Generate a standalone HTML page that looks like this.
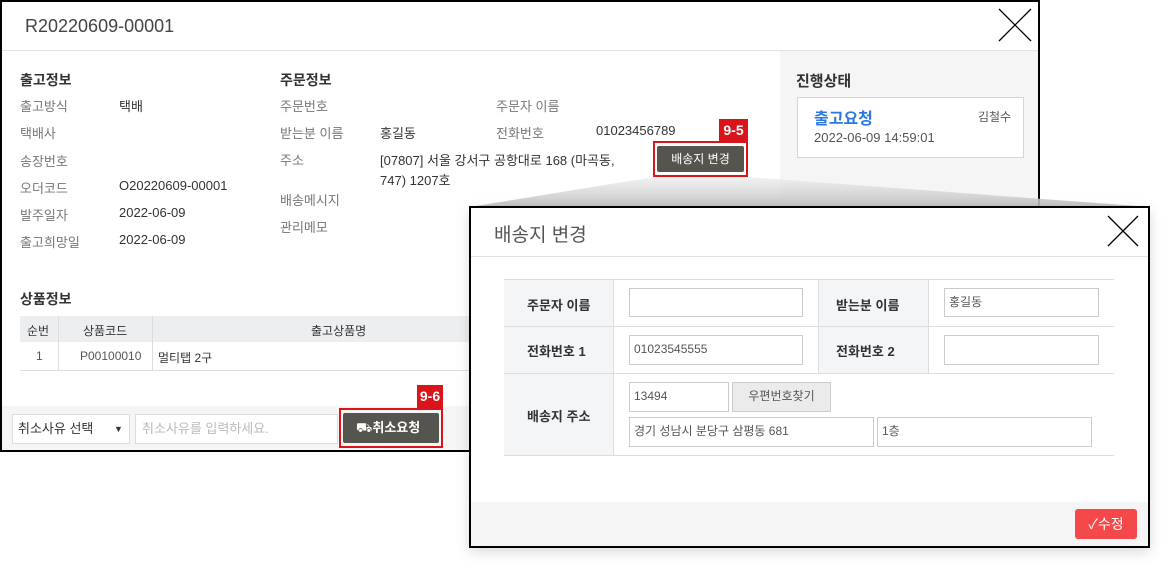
<!DOCTYPE html>
<html><head><meta charset="utf-8"><style>
*{margin:0;padding:0;box-sizing:border-box}
body{width:1173px;height:572px;background:#fff;position:relative;overflow:hidden;font-family:"Liberation Sans","Noto Sans CJK KR",sans-serif;font-size:13px;color:#333}
.a{position:absolute;white-space:nowrap}
.g{color:#777}
.t{font-weight:bold;font-size:14px;color:#333}
.in{position:absolute;background:#fff;border:1px solid #ccc;font-size:12px;color:#555;line-height:27px;padding-left:4px;white-space:nowrap}
</style></head><body>
<div class="a" style="left:0;top:0;width:1040px;height:452px;border:2px solid #000;background:#fff"></div>
<div class="a" style="left:2px;top:50px;width:1036px;height:1px;background:#e2e2e2"></div>
<div class="a" style="left:25px;top:16px;font-size:18px;color:#444">R20220609-00001</div>
<svg class="a" style="left:998px;top:8px" width="34" height="34"><path d="M1 1L33 33M33 1L1 33" stroke="#000" stroke-width="1.3"/></svg>
<div class="a" style="left:780px;top:51px;width:258px;height:399px;background:#f5f5f5"></div>
<div class="a t" style="left:796px;top:70px;font-size:15px">진행상태</div>
<div class="a" style="left:797px;top:97px;width:227px;height:61px;background:#fff;border:1px solid #d6d6d6"></div>
<div class="a" style="left:814px;top:105px;font-size:16px;color:#2a7ae2;font-weight:bold">출고요청</div>
<div class="a" style="left:978px;top:108px;font-size:12px;color:#555">김철수</div>
<div class="a" style="left:814px;top:130px;font-size:13px;color:#555">2022-06-09 14:59:01</div>

<div class="a t" style="left:20px;top:70px">출고정보</div>
<div class="a g" style="left:20px;top:96px">출고방식</div><div class="a" style="left:119px;top:96px">택배</div>
<div class="a g" style="left:20px;top:123px">택배사</div>
<div class="a g" style="left:20px;top:151px">송장번호</div>
<div class="a g" style="left:20px;top:178px">오더코드</div><div class="a" style="left:119px;top:178px">O20220609-00001</div>
<div class="a g" style="left:20px;top:205px">발주일자</div><div class="a" style="left:119px;top:205px">2022-06-09</div>
<div class="a g" style="left:20px;top:232px">출고희망일</div><div class="a" style="left:119px;top:232px">2022-06-09</div>

<div class="a t" style="left:280px;top:70px">주문정보</div>
<div class="a g" style="left:280px;top:96px">주문번호</div>
<div class="a g" style="left:496px;top:96px">주문자 이름</div>
<div class="a g" style="left:280px;top:123px">받는분 이름</div><div class="a" style="left:380px;top:123px">홍길동</div>
<div class="a g" style="left:496px;top:123px">전화번호</div><div class="a" style="left:596px;top:123px">01023456789</div>
<div class="a g" style="left:280px;top:150px">주소</div>
<div class="a" style="left:380px;top:150px">[07807] 서울 강서구 공항대로 168 (마곡동,</div>
<div class="a" style="left:380px;top:170px">747) 1207호</div>
<div class="a g" style="left:280px;top:190px">배송메시지</div>
<div class="a g" style="left:280px;top:217px">관리메모</div>

<div class="a" style="left:719px;top:119px;width:29px;height:22px;background:#d9141b;color:#fff;font-weight:bold;font-size:14px;text-align:center;line-height:22px">9-5</div>
<div class="a" style="left:653px;top:141px;width:95px;height:36px;border:2px solid #d9141b"></div>
<div class="a" style="left:657px;top:146px;width:87px;height:26px;background:#56544f;border-radius:2px;color:#fff;font-size:12px;text-align:center;line-height:26px">배송지 변경</div>

<div class="a t" style="left:20px;top:289px">상품정보</div>
<div class="a" style="left:20px;top:316px;width:450px;height:55px;border-bottom:1px solid #ddd"></div>
<div class="a" style="left:20px;top:316px;width:450px;height:26px;background:#edeef0"></div>
<div class="a" style="left:58px;top:316px;width:1px;height:55px;background:#ddd"></div>
<div class="a" style="left:152px;top:316px;width:1px;height:55px;background:#ddd"></div>
<div class="a" style="left:27px;top:322px;font-size:12px">순번</div>
<div class="a" style="left:83px;top:322px;font-size:12px">상품코드</div>
<div class="a" style="left:311px;top:322px;font-size:12px">출고상품명</div>
<div class="a" style="left:36px;top:349px;font-size:12px;color:#555">1</div>
<div class="a" style="left:80px;top:349px;font-size:12px;color:#555">P00100010</div>
<div class="a" style="left:158px;top:349px;font-size:12px">멀티탭 2구</div>

<div class="a" style="left:2px;top:406px;width:1036px;height:44px;background:#f5f5f5"></div>
<div class="a" style="left:12px;top:414px;width:118px;height:30px;background:#fff;border:1px solid #ddd;font-size:13px;line-height:28px;padding-left:5px">취소사유 선택<span style="position:absolute;left:101px;font-size:9px">▼</span></div>
<div class="a" style="left:135px;top:414px;width:203px;height:30px;background:#fff;border:1px solid #ddd;font-size:13px;color:#bbb;line-height:28px;padding-left:6px">취소사유를 입력하세요.</div>
<div class="a" style="left:417px;top:385px;width:26px;height:23px;background:#d9141b;color:#fff;font-weight:bold;font-size:14px;text-align:center;line-height:23px">9-6</div>
<div class="a" style="left:339px;top:408px;width:104px;height:40px;border:2px solid #d9141b"></div>
<div class="a" style="left:343px;top:413px;width:96px;height:30px;background:#56544f;border-radius:2px;color:#fff;font-size:13px;font-weight:bold;line-height:30px;padding-left:13px"><span style="font-weight:normal">⛟</span>취소요청</div>

<svg class="a" style="left:0;top:0" width="1173" height="572"><defs><linearGradient id="gg" x1="0" y1="0" x2="0" y2="1"><stop offset="0" stop-color="#ececec" stop-opacity=".7"/><stop offset="1" stop-color="#bcbcbc" stop-opacity=".9"/></linearGradient></defs><polygon points="654,177 748,177 1150,207 470,207" fill="url(#gg)"/></svg>

<div class="a" style="left:469px;top:206px;width:681px;height:342px;border:2px solid #000;background:#fff;box-shadow:0 4px 12px rgba(0,0,0,.15)"></div>
<div class="a" style="left:471px;top:256px;width:677px;height:1px;background:#e2e2e2"></div>
<div class="a" style="left:494px;top:220px;font-size:19px;color:#555">배송지 변경</div>
<svg class="a" style="left:1107px;top:215px" width="32" height="32"><path d="M1 1L31 31M31 1L1 31" stroke="#000" stroke-width="1.3"/></svg>
<div class="a" style="left:504px;top:279px;width:610px;height:177px;border-top:1px solid #ddd;border-bottom:1px solid #ddd"></div>
<div class="a" style="left:504px;top:280px;width:110px;height:175px;background:#f4f5f7;border-right:1px solid #ddd"></div>
<div class="a" style="left:818px;top:280px;width:111px;height:93px;background:#f4f5f7;border-left:1px solid #ddd;border-right:1px solid #ddd"></div>
<div class="a" style="left:504px;top:326px;width:610px;height:1px;background:#ddd"></div>
<div class="a" style="left:504px;top:373px;width:610px;height:1px;background:#ddd"></div>
<div class="a" style="left:527px;top:295px;font-weight:bold;font-size:13px">주문자 이름</div>
<div class="a" style="left:836px;top:295px;font-weight:bold;font-size:13px">받는분 이름</div>
<div class="a" style="left:527px;top:341px;font-weight:bold;font-size:13px">전화번호 1</div>
<div class="a" style="left:836px;top:341px;font-weight:bold;font-size:13px">전화번호 2</div>
<div class="a" style="left:527px;top:406px;font-weight:bold;font-size:13px">배송지 주소</div>
<div class="in" style="left:629px;top:288px;width:174px;height:29px"></div>
<div class="in" style="left:944px;top:288px;width:155px;height:29px">홍길동</div>
<div class="in" style="left:629px;top:335px;width:174px;height:30px">01023545555</div>
<div class="in" style="left:944px;top:335px;width:155px;height:30px"></div>
<div class="in" style="left:629px;top:382px;width:100px;height:30px">13494</div>
<div class="in" style="left:732px;top:382px;width:99px;height:30px;background:#ebebeb;text-align:center;padding:0;color:#555">우편번호찾기</div>
<div class="in" style="left:629px;top:417px;width:245px;height:30px">경기 성남시 분당구 삼평동 681</div>
<div class="in" style="left:877px;top:417px;width:215px;height:30px">1층</div>
<div class="a" style="left:471px;top:502px;width:677px;height:44px;background:#f5f5f5"></div>
<div class="a" style="left:1075px;top:509px;width:62px;height:30px;background:#f4484a;border-radius:3px;color:#fff;font-size:14px;line-height:30px;text-align:center">✓수정</div>
</body></html>
